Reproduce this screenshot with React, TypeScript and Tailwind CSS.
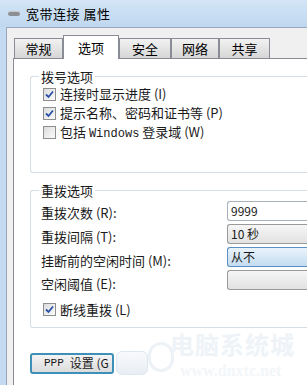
import React from "react";

const cjk = { fontFamily: '"Noto Sans CJK SC", "Liberation Sans", sans-serif' };

function Check({ checked }: { checked: boolean }) {
  return (
    <div className="w-[13px] h-[13px] border border-[#8f8f8f] bg-gradient-to-br from-[#dcdcdc] to-[#fbfbfb] flex items-center justify-center shrink-0">
      {checked && (
        <svg width="9" height="9" viewBox="0 0 9 9">
          <path d="M1 4.5 L3.5 7 L8 1.5" stroke="#2a4fa8" strokeWidth="1.8" fill="none" />
        </svg>
      )}
    </div>
  );
}

function Tab({ label, selected, w }: { label: string; selected?: boolean; w: string }) {
  return selected ? (
    <div className={`h-[24px] ${w} flex items-start justify-center pt-[2px] bg-white border border-b-0 border-[#898c95] -mb-px z-10 relative`}>
      <span className="text-[13px] text-black">{label}</span>
    </div>
  ) : (
    <div className={`h-[20px] ${w} flex items-center justify-center bg-gradient-to-b from-[#f2f2f2] to-[#d6d6d6] border border-b-0 border-[#898c95]`}>
      <span className="text-[13px] text-black">{label}</span>
    </div>
  );
}

function Field({ text, hi, plain }: { text: string; hi?: boolean; plain?: boolean }) {
  const cls = plain
    ? "bg-white border-[#a9b1bb]"
    : hi
    ? "bg-gradient-to-b from-[#e9f3fb] to-[#c4dcf0] border-[#5c8fbf]"
    : "bg-gradient-to-b from-[#f6f6f6] to-[#e2e2e2] border-[#9a9a9a]";
  return (
    <div className={`h-[20px] w-[80px] border rounded-l-[3px] border-r-0 flex items-center pl-[3px] text-[12px] text-[#1a1a1a] ${cls}`}>
      {text}
    </div>
  );
}

export default function App() {
  return (
    <div className="w-[307px] h-[385px] overflow-hidden flex flex-col bg-[#c4daf0] relative" style={cjk}>
      {/* title bar */}
      <div className="h-[27px] flex items-center pl-[8px] gap-[6px] bg-gradient-to-b from-[#d3e5f6] to-[#bfd7ef] shrink-0">
        <div className="w-[12px] h-[5px] rounded-full bg-[#8c8f94] border-t border-[#c8c8c8]" />
        <span className="text-[13px] text-black tracking-[0.5px]">宽带连接 属性</span>
      </div>
      <div className="flex-1 flex">
        <div className="w-[6px] bg-[#c4daf0] shrink-0" />
        <div className="flex-1 bg-[#f0f0f0] border-l border-t border-[#97a6b8] pl-[6px] pt-[6px] flex flex-col">
          {/* tabs */}
          <div className="flex items-end h-[24px] pl-[1px] relative">
            <Tab label="常规" w="w-[49px]" />
            <Tab label="选项" selected w="w-[56px]" />
            <Tab label="安全" w="w-[52px]" />
            <Tab label="网络" w="w-[48px]" />
            <Tab label="共享" w="w-[51px]" />
          </div>
          {/* panel */}
          <div className="flex-1 bg-white border-l border-t border-[#898c95] pl-[16px] pt-[17px] flex flex-col">
            {/* group 1 */}
            <div className="relative border border-r-0 border-[#d5dfe5] rounded-l-[3px] h-[97px] pl-[12px] pt-[10px] flex flex-col gap-[5px]">
              <span className="absolute -top-[10px] left-[8px] bg-white px-[2px] text-[13px] text-[#1a1a1a]">拨号选项</span>
              <div className="flex items-center gap-[4px] h-[14px]">
                <Check checked />
                <span className="text-[13px] text-[#1a1a1a] whitespace-nowrap">连接时显示进度 (I)</span>
              </div>
              <div className="flex items-center gap-[4px] h-[14px]">
                <Check checked />
                <span className="text-[13px] text-[#1a1a1a] whitespace-nowrap">提示名称、密码和证书等 (P)</span>
              </div>
              <div className="flex items-center gap-[4px] h-[14px]">
                <Check checked={false} />
                <span className="text-[13px] text-[#1a1a1a] whitespace-nowrap">
                  包括 <span style={{ fontFamily: '"Liberation Mono", monospace' }} className="text-[12px]">Windows</span> 登录域 (W)
                </span>
              </div>
            </div>
            {/* group 2 */}
            <div className="relative mt-[17px] border border-r-0 border-[#d5dfe5] rounded-l-[3px] h-[138px] pl-[10px] pt-[10px] flex">
              <span className="absolute -top-[10px] left-[8px] bg-white px-[2px] text-[13px] text-[#1a1a1a]">重拨选项</span>
              <div className="flex-1 flex flex-col">
                <div className="h-[24px] flex items-center text-[13px] text-[#1a1a1a]">重拨次数 (R):</div>
                <div className="h-[24px] flex items-center text-[13px] text-[#1a1a1a]">重拨间隔 (T):</div>
                <div className="h-[23px] flex items-center text-[13px] text-[#1a1a1a] whitespace-nowrap">挂断前的空闲时间 (M):</div>
                <div className="h-[24px] flex items-center text-[13px] text-[#1a1a1a]">空闲阈值 (E):</div>
                <div className="h-[27px] flex items-center gap-[4px] text-[13px] text-[#1a1a1a] pl-[2px]">
                  <Check checked />
                  <span>断线重拨 (L)</span>
                </div>
              </div>
              <div className="flex flex-col gap-[3px] pt-[1px] -mt-[1px]">
                <Field text="9999" plain />
                <Field text="10 秒" />
                <Field text="从不" hi />
                <Field text="" />
              </div>
            </div>
            {/* button row */}
            <div className="mt-[23px] flex items-center">
              <div className="w-[84px] h-[21px] rounded-[3px] border-2 border-[#3e90b8] bg-gradient-to-b from-[#f4f4f4] to-[#dcdcdc] flex items-center pl-[12px] text-[12px] text-[#1a1a1a] whitespace-nowrap overflow-hidden">
                <span style={{ fontFamily: '"Liberation Mono", monospace' }} className="text-[11px]">PPP</span>
                <span className="ml-[6px]">设置 (G</span>
              </div>
              <div className="ml-[2px] w-[32px] h-[24px] rounded-[6px] border border-[#dde7f0] bg-gradient-to-b from-[#f9fafc] to-[#e8eef4]" />
            </div>
          </div>
        </div>
      </div>
      {/* watermark */}
      <div className="absolute left-[170px] top-[331px] h-[26px] leading-[26px] text-[24px] font-bold text-[#eef3f8] tracking-[1px] whitespace-nowrap pointer-events-none">
        电脑系统城
      </div>
      <div className="absolute left-[180px] top-[362px] h-[18px] leading-[18px] text-[16px] font-bold text-[#f3f6f9] whitespace-nowrap pointer-events-none" style={{ fontFamily: '"Liberation Serif", serif' }}>
        www.dnxtc.net
      </div>
      <div className="absolute left-[148px] top-[342px] w-[26px] h-[30px] rounded-full border-[3px] border-[#edf2f7] pointer-events-none" />
    </div>
  );
}
